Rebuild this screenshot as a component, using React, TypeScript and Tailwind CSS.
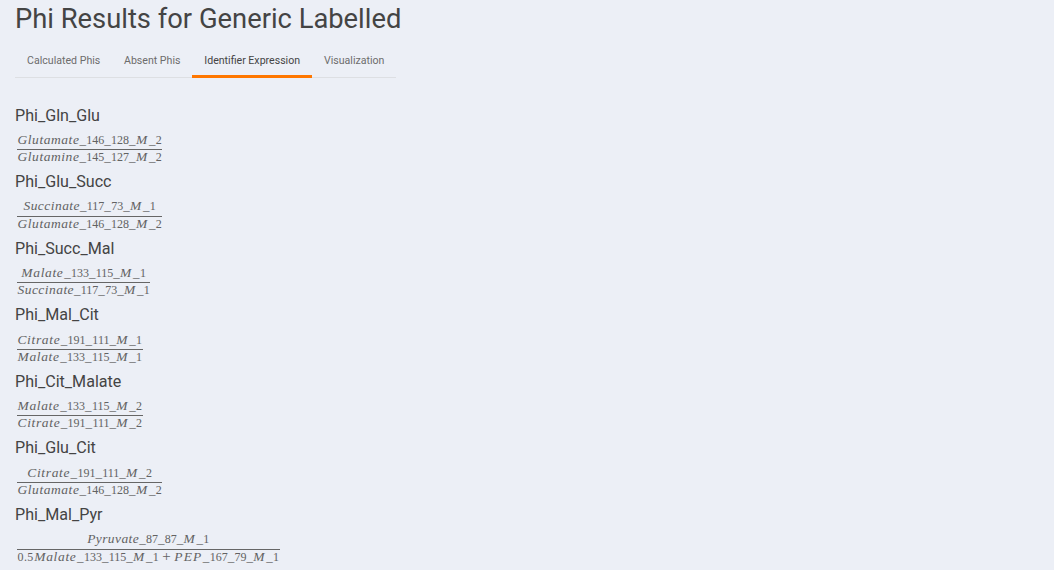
import React from "react";

const words: Record<string, string> = {
  Glutamate: "w-[62px] tracking-[0.55px]",
  Glutamine: "w-[62px] tracking-[0.55px]",
  Succinate: "w-[56.5px] tracking-[0.45px]",
  Malate: "w-[42.8px] tracking-[0.65px]",
  Citrate: "w-[43.3px] tracking-[0.65px]",
  Pyruvate: "w-[52px] tracking-[0.4px]",
  PEP: "w-[28.5px] tracking-[1.1px]",
  M: "w-[13px]",
};

function MathText({ text }: { text: string }) {
  const tokens = text.match(/[A-Za-z]+|[\d.]+|_|\+/g) ?? [];
  return (
    <div className="flex h-[17px] items-baseline justify-center whitespace-nowrap font-['Liberation_Serif',serif] text-[12px] leading-[17px] text-[#626262]">
      {tokens.map((t, i) => {
        if (t === "_") return <span key={i} className="w-[6.8px] text-[13px]">_</span>;
        if (t === "+") return <span key={i} className="w-[15.5px] text-center text-[15px]">+</span>;
        if (t === "0.5") return <span key={i} className="w-[16.8px] tracking-[0.4px]">{t}</span>;
        if (/\d/.test(t)) return <span key={i}>{t}</span>;
        return <i key={i} className={"text-[13.5px] " + (words[t] ?? "")}>{t}</i>;
      })}
    </div>
  );
}

const rows = [
  ["Phi_Gln_Glu", "Glutamate_146_128_M_2", "Glutamine_145_127_M_2"],
  ["Phi_Glu_Succ", "Succinate_117_73_M_1", "Glutamate_146_128_M_2"],
  ["Phi_Succ_Mal", "Malate_133_115_M_1", "Succinate_117_73_M_1"],
  ["Phi_Mal_Cit", "Citrate_191_111_M_1", "Malate_133_115_M_1"],
  ["Phi_Cit_Malate", "Malate_133_115_M_2", "Citrate_191_111_M_2"],
  ["Phi_Glu_Cit", "Citrate_191_111_M_2", "Glutamate_146_128_M_2"],
  ["Phi_Mal_Pyr", "Pyruvate_87_87_M_1", "0.5Malate_133_115_M_1+PEP_167_79_M_1"],
];

const tabs = [
  { label: "Calculated Phis", width: "w-[97px]" },
  { label: "Absent Phis", width: "w-[80px]" },
  { label: "Identifier Expression", width: "w-[120px]" },
  { label: "Visualization", width: "w-[84px]" },
];

export default function App() {
  return (
    <main className="h-[570px] overflow-hidden bg-[#eceff6] pl-[15px] font-['Roboto',sans-serif] text-[#444444]">
      <h1 className="h-[44px] whitespace-nowrap text-[27.35px] leading-[39px]">Phi Results for Generic Labelled</h1>
      <nav className="flex h-[34px] w-[381px] border-b border-[#dddfe3]">
        {tabs.map((t, i) => (
          <button
            key={t.label}
            className={
              "flex h-[34px] shrink-0 justify-center border-b-3 whitespace-nowrap text-[10.6px] leading-[33px] " +
              t.width +
              (i === 2 ? " border-[#ff7700] text-[#444444]" : " border-transparent text-[#6c6c6c]")
            }
          >
            <span className="block h-[31px] pl-[0.4px]">{t.label}</span>
          </button>
        ))}
      </nav>
      <div className="pt-[25.5px]">
        {rows.map(([name, top, bottom]) => (
          <section key={name} className="h-[66.6px]">
            <h2 className="h-[27.3px] text-[16.1px] leading-[24px]">{name}</h2>
            <div className="ml-[2px] w-fit">
              <div className="h-[19.2px] border-b border-[#666666]">
                <MathText text={top} />
              </div>
              <div className="-mt-[1.9px] px-[0.5px]">
                <MathText text={bottom} />
              </div>
            </div>
          </section>
        ))}
      </div>
    </main>
  );
}
